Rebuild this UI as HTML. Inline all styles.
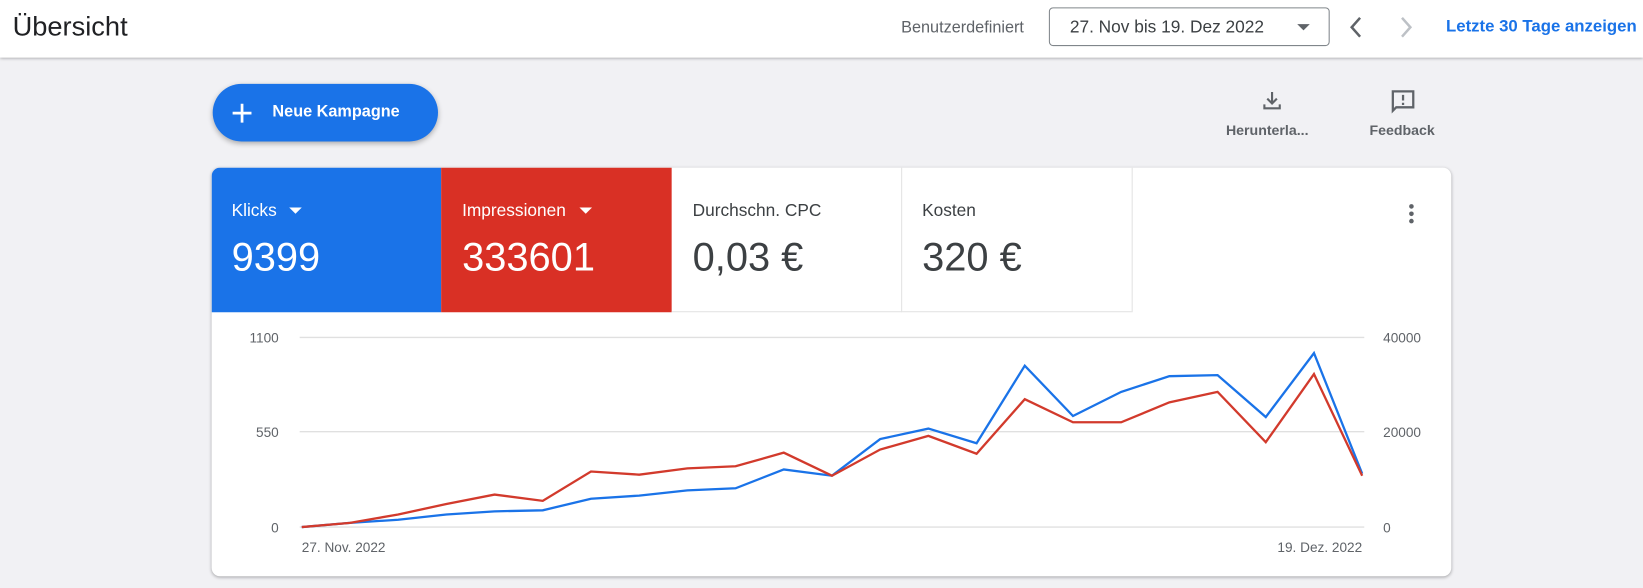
<!DOCTYPE html>
<html><head><meta charset="utf-8"><style>
html,body{margin:0;padding:0;width:1643px;height:588px;overflow:hidden;background:#f1f1f4;font-family:"Liberation Sans",Arial,sans-serif;}
#w{position:absolute;left:0;top:0;width:1568px;height:561px;transform:scale(1.04783);transform-origin:0 0;overflow:hidden;}
.a{position:absolute;}
#hdr{left:0;top:0;width:1568px;height:55px;background:#fff;box-shadow:0 1px 3px rgba(0,0,0,.35);}
.t{white-space:nowrap;}
</style></head><body><div id="w">
<div id="hdr" class="a">
 <div class="a t" style="left:12px;top:10px;font-size:26px;color:#202124;">Übersicht</div>
 <div class="a t" style="left:860px;top:18px;font-size:15.5px;color:#5f6368;">Benutzerdefiniert</div>
 <div class="a" style="left:1001px;top:7px;width:266px;height:35px;border:1px solid #80868b;border-radius:4px;"></div>
 <div class="a t" style="left:1021px;top:17px;font-size:16.5px;color:#3c4043;">27. Nov bis 19. Dez 2022</div>
 <div class="a" style="left:1238px;top:23px;width:0;height:0;border-left:6px solid transparent;border-right:6px solid transparent;border-top:6px solid #5f6368;"></div>
 <svg class="a" style="left:1283px;top:13px" width="22" height="26" viewBox="0 0 22 26"><path d="M15 4 L7 13 L15 22" fill="none" stroke="#5f6368" stroke-width="2.4"/></svg>
 <svg class="a" style="left:1331px;top:13px" width="22" height="26" viewBox="0 0 22 26"><path d="M7 4 L15 13 L7 22" fill="none" stroke="#bdc1c6" stroke-width="2.4"/></svg>
 <div class="a t" style="left:1380px;top:17px;font-size:16px;font-weight:bold;color:#1a73e8;">Letzte 30 Tage anzeigen</div>
</div>

<div class="a" style="left:203px;top:80px;width:215px;height:55px;border-radius:28px;background:#1a73e8;box-shadow:0 2px 5px rgba(0,0,0,.3);"></div>
<svg class="a" style="left:220px;top:97px" width="22" height="22"><path d="M11 2V20M2 11H20" stroke="#fff" stroke-width="2.6"/></svg>
<div class="a t" style="left:260px;top:98px;font-size:15.5px;font-weight:bold;color:#fff;">Neue Kampagne</div>

<svg class="a" style="left:1203px;top:85px" width="22" height="22" viewBox="0 0 24 24"><path d="M12 3V15M7 10L12 15L17 10M4 16V20H20V16" fill="none" stroke="#5f6368" stroke-width="2.2"/></svg>
<div class="a t" style="left:1170px;top:117px;font-size:13.5px;font-weight:bold;color:#5f6368;">Herunterla...</div>
<svg class="a" style="left:1326px;top:84px" width="26" height="26" viewBox="0 0 24 24"><path d="M3 3H21V17H6L3 20Z" fill="none" stroke="#5f6368" stroke-width="2"/><path d="M12 6V11M12 13V15" stroke="#5f6368" stroke-width="2"/></svg>
<div class="a t" style="left:1307px;top:117px;font-size:13.5px;font-weight:bold;color:#5f6368;">Feedback</div>

<div class="a" style="left:202px;top:160px;width:1183px;height:390px;background:#fff;border-radius:8px;box-shadow:0 1px 3px rgba(0,0,0,.3);overflow:hidden;">
 <div class="a" style="left:0;top:0;width:219px;height:138px;background:#1a73e8;"></div>
 <div class="a" style="left:219px;top:0;width:220px;height:138px;background:#d93025;"></div>
 <div class="a" style="left:658px;top:0;width:1px;height:138px;background:#e3e3e3;"></div>
 <div class="a" style="left:878px;top:0;width:1px;height:138px;background:#e3e3e3;"></div>
 <div class="a" style="left:439px;top:137px;width:439px;height:1px;background:#e3e3e3;"></div>
 <div class="a t" style="left:19px;top:32px;font-size:16.5px;color:#fff;">Klicks</div>
 <div class="a" style="left:74px;top:38px;border-left:6px solid transparent;border-right:6px solid transparent;border-top:6px solid #fff;"></div>
 <div class="a t" style="left:19px;top:65px;font-size:38px;color:#fff;">9399</div>
 <div class="a t" style="left:239px;top:32px;font-size:16.5px;color:#fff;">Impressionen</div>
 <div class="a" style="left:351px;top:38px;border-left:6px solid transparent;border-right:6px solid transparent;border-top:6px solid #fff;"></div>
 <div class="a t" style="left:239px;top:65px;font-size:38px;color:#fff;">333601</div>
 <div class="a t" style="left:459px;top:32px;font-size:16.5px;color:#3c4043;">Durchschn. CPC</div>
 <div class="a t" style="left:459px;top:65px;font-size:38px;color:#3c4043;">0,03 €</div>
 <div class="a t" style="left:678px;top:32px;font-size:16.5px;color:#3c4043;">Kosten</div>
 <div class="a t" style="left:678px;top:65px;font-size:38px;color:#3c4043;">320 €</div>
 <svg class="a" style="left:1140px;top:33px" width="10" height="22"><circle cx="5" cy="4" r="2.2" fill="#5f6368"/><circle cx="5" cy="11" r="2.2" fill="#5f6368"/><circle cx="5" cy="18" r="2.2" fill="#5f6368"/></svg>
</div>

<svg class="a" style="left:0;top:0" width="1568" height="561">
 <g stroke="#e0e0e0" stroke-width="1.3"><line x1="286" y1="322" x2="1302" y2="322"/><line x1="286" y1="412" x2="1302" y2="412"/><line x1="286" y1="503" x2="1302" y2="503"/></g>
 <g font-family="Liberation Sans,Arial,sans-serif" font-size="13" fill="#5f6368">
  <text x="266" y="327" text-anchor="end">1100</text><text x="266" y="417" text-anchor="end">550</text><text x="266" y="508" text-anchor="end">0</text>
  <text x="1320" y="327">40000</text><text x="1320" y="417">20000</text><text x="1320" y="508">0</text>
  <text x="288" y="527">27. Nov. 2022</text><text x="1300" y="527" text-anchor="end">19. Dez. 2022</text>
 </g>
 <polyline fill="none" stroke="#1a73e8" stroke-width="2.2" points="288,503 334,499 380,496 426,491 472,488 518,487 564,476 610,473 656,468 702,466 748,448 794,454 840,419 886,409 932,423 978,349 1024,397 1070,374 1116,359 1162,358 1208,398 1254,337 1300,452"/>
 <polyline fill="none" stroke="#d23a2c" stroke-width="2.2" points="288,503 334,499 380,491 426,481 472,472 518,478 564,450 610,453 656,447 702,445 748,432 794,454 840,429 886,416 932,433 978,381 1024,403 1070,403 1116,384 1162,374 1208,422 1254,357 1300,454"/>
</svg>
</div></body></html>
